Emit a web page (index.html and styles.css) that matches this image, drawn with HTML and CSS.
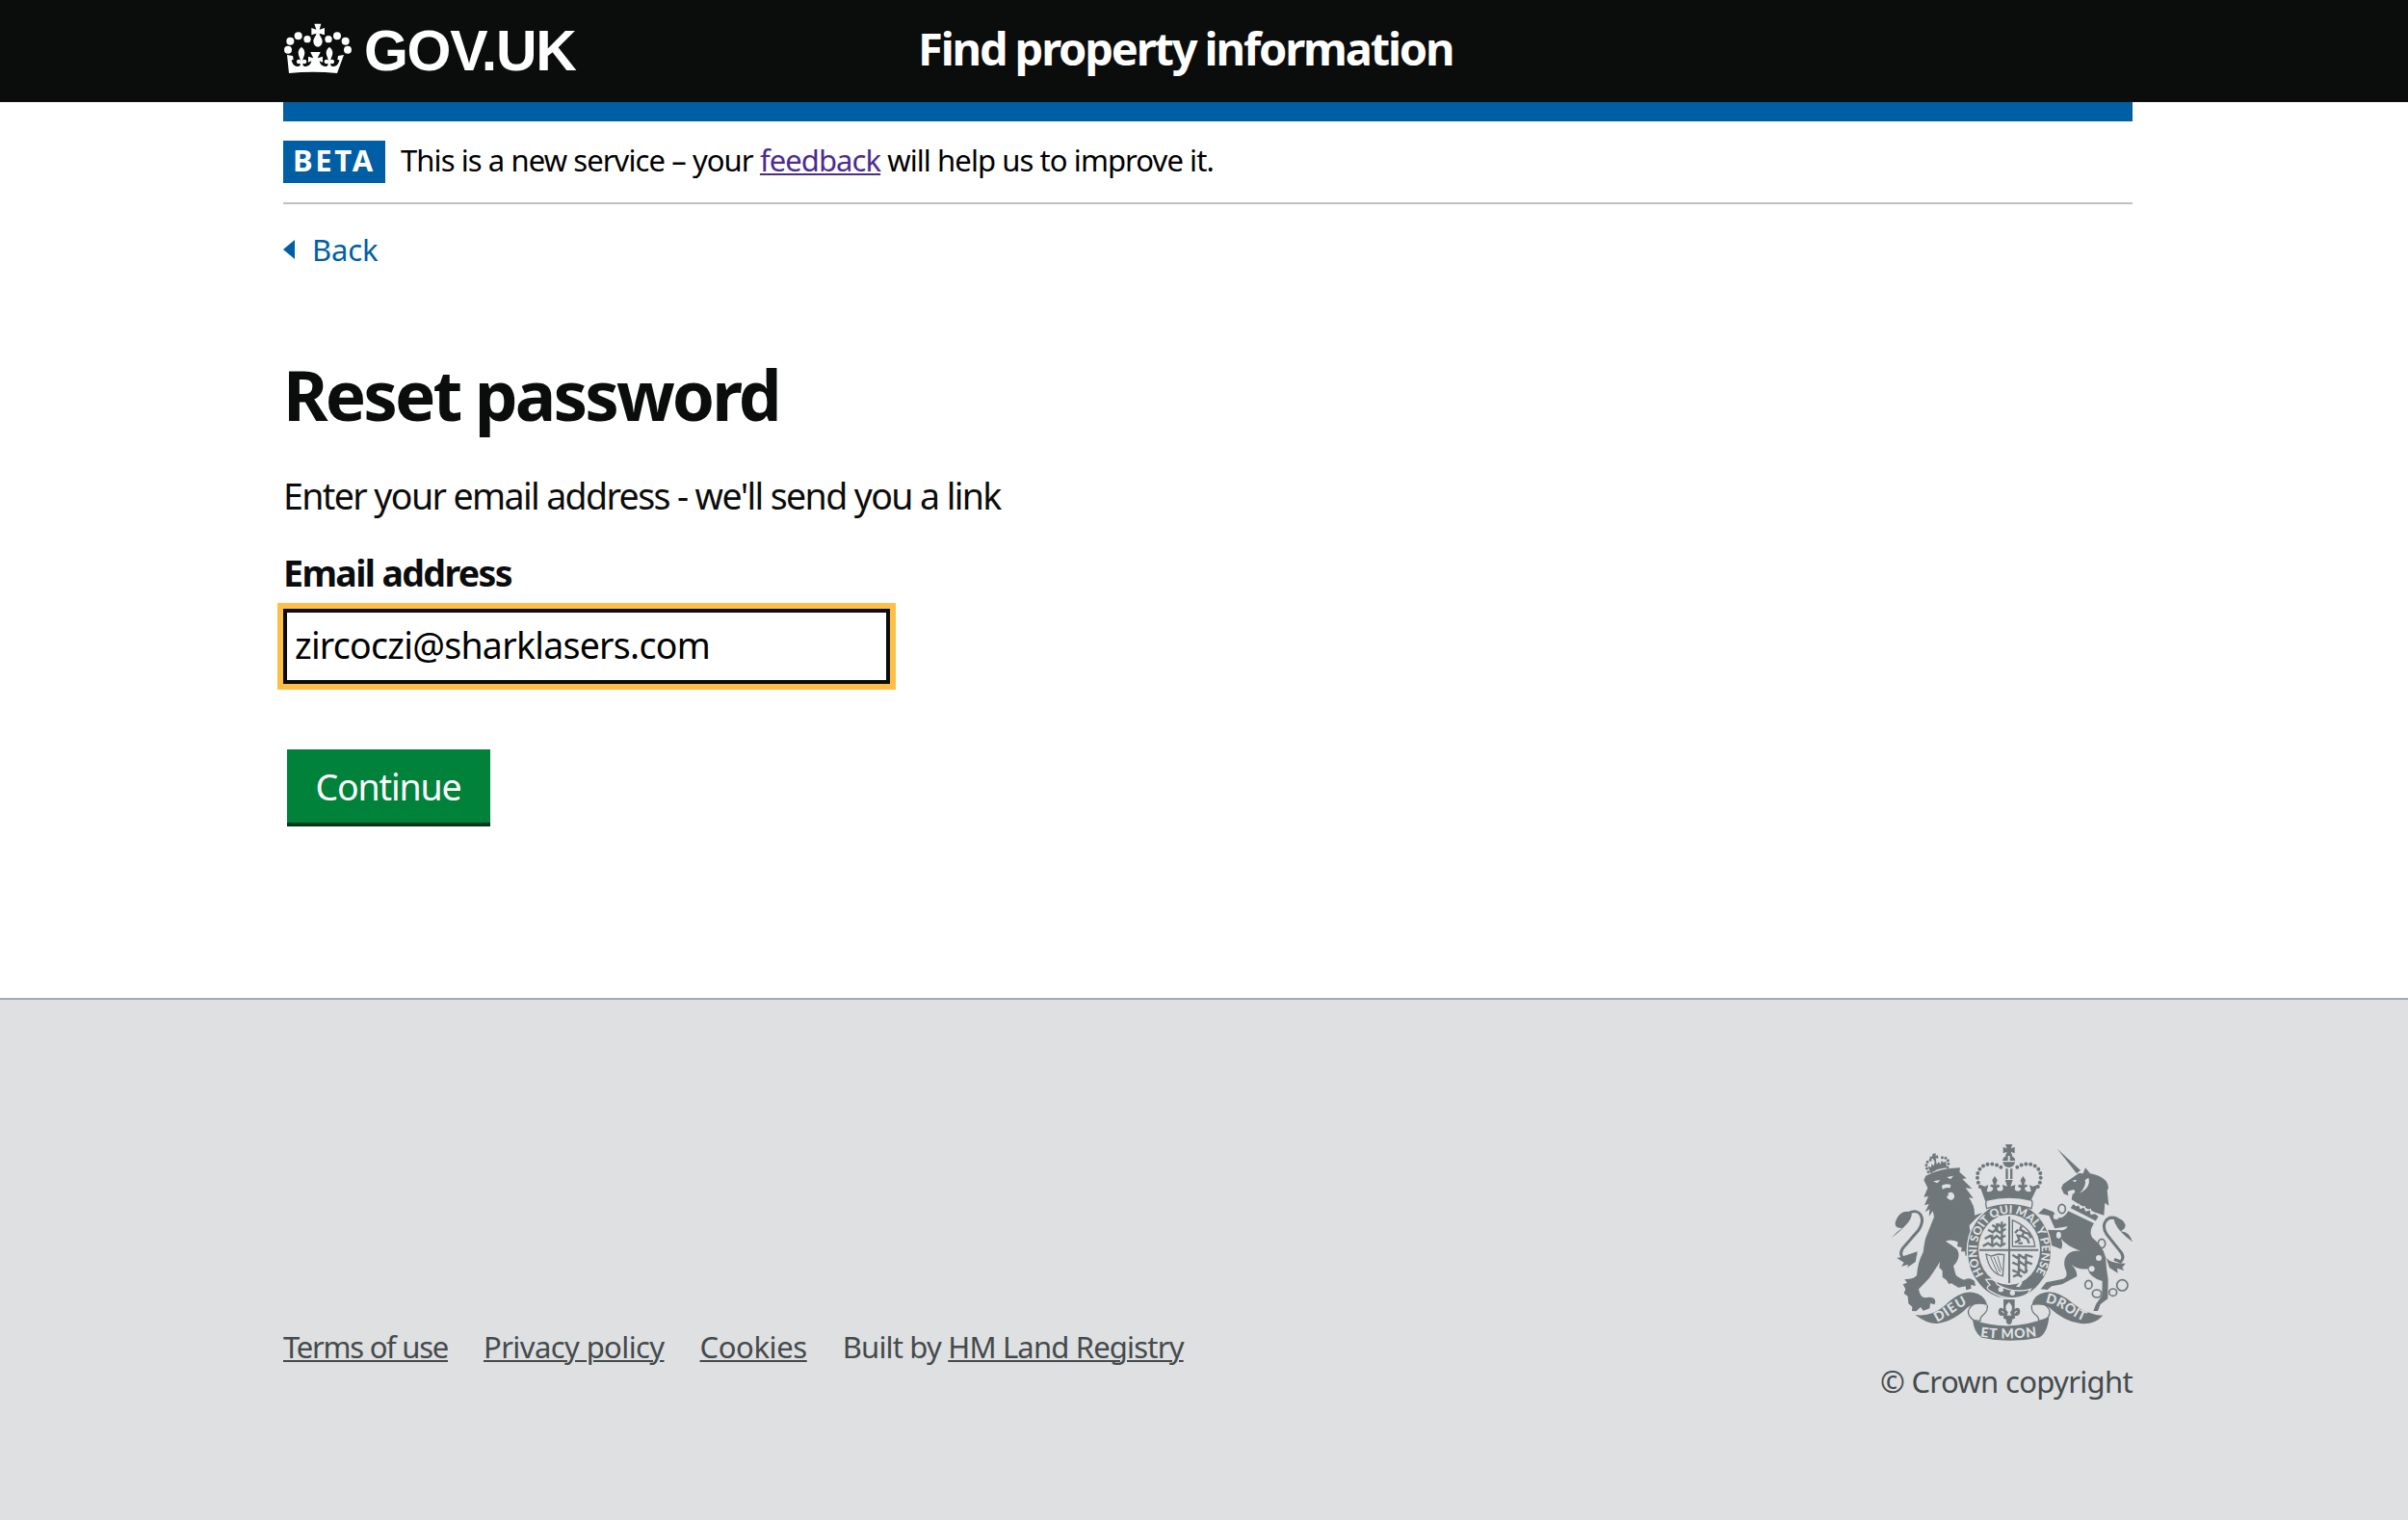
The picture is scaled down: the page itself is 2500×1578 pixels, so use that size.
FILE: index.html
```html
<!DOCTYPE html>
<html lang="en">
<head>
<meta charset="utf-8">
<title>Reset password</title>
<link rel="stylesheet" href="styles.css">
</head>
<body>
<header class="header">
  <div class="container header-row">
    <a class="logo" href="#">
      <svg class="crown" viewBox="45 42 210 156" fill="#fff">
        <path d="M139 44h21l-5 18 16-5v22l-16-5c0 8 9 14 9 25a14 17 0 0 1-28 0c0-11 9-17 9-25l-15 5V57l15 5z"/>
        <circle cx="89" cy="82" r="12"/><circle cx="210" cy="82" r="12"/><circle cx="117" cy="92" r="11"/><circle cx="183" cy="92" r="11"/><circle cx="64" cy="98" r="12"/><circle cx="236" cy="98" r="12"/><circle cx="57" cy="125" r="12"/><circle cx="243" cy="125" r="12"/>
        <path d="M54 141l18 3 2 12-6 1c2 13 11 21 19 20 8-1 11-7 6-10-4 3-9 1-9-5s7-9 11-4c0-9-6-14-6-24 0-8 5-14 10-18 5 4 10 10 10 18 0 10-6 15-6 24 4-5 12-2 12 4s-6 8-10 5c-4 4 0 10 7 10 9 0 16-6 18-17l-10 4v-18l15 5c0-6-6-11-8-19h31c-2 8-8 13-8 19l15-5v18l-10-4c2 11 9 17 18 17 7 0 11-6 7-10-4 3-10 1-10-5s8-9 12-4c0-9-6-14-6-24 0-8 5-14 10-18 5 4 10 10 10 18 0 10-6 15-6 24 4-5 11-2 11 4s-5 8-9 5c-5 3-2 9 6 10 8 1 17-7 19-20l-6-1 2-12 18-3-21 57c-50-5-100-5-150 0z"/>
      </svg>
      <span class="logo-text">GOV.UK</span>
    </a>
    <span class="service">Find property information</span>
  </div>
</header>
<main class="container">
  <div class="bar"></div>
  <div class="phase">
    <strong class="tag">BETA</strong>
    <p class="phase-text">This is a new service – your <a class="visited" href="#">feedback</a> will help us to improve it.</p>
  </div>
  <a class="back" href="#"><svg width="12" height="20" viewBox="0 0 12 20"><path d="M0 10L12 0v20z" fill="#005ea5"/></svg>Back</a>
  <h1>Reset password</h1>
  <p class="intro">Enter your email address - we'll send you a link</p>
  <label class="label" for="email">Email address</label>
  <input class="field" id="email" type="email" value="zircoczi@sharklasers.com">
  <button class="button">Continue</button>
</main>
<footer class="footer">
  <div class="container footer-row">
    <nav class="links">
      <a class="terms" href="#">Terms of use</a><a class="privacy" href="#">Privacy policy</a><a class="cookies" href="#">Cookies</a><span class="built">Built by <a href="#">HM Land Registry</a></span>
    </nav>
    <div class="copyright">
      <svg class="crest" viewBox="72 54 750 612" fill="#6f777b">
        <defs>
          <path id="motto" d="M359 459A101 117 0 1 1 503 476"/>
          <path id="rib-l" d="M213 608C255 590 275 562 322 546"/>
          <path id="rib-m" d="M348 653Q440 665 540 649"/>
          <path id="rib-r" d="M550 547C600 553 625 590 680 608"/>
        </defs>
        <!-- central crown -->
        <path d="M426 54h22l-5 13 12-5v20l-12-5 5 13h-22l5-13-12 5V62l12 5z"/>
        <path d="M417 105a20 18 0 0 1 17-16v16zM440 89a20 18 0 0 1 17 16h-17zM418 109h38a19 17 0 0 1-38 0zM427 130h7v32h-7zM441 130h7v32h-7z"/>
        <g fill="none" stroke="#6f777b" stroke-width="12" stroke-linecap="round" stroke-dasharray="0 14.5"><path d="M412 125C385 105 335 115 339 160Q341 180 352 192"/><path d="M463 125C490 105 540 115 536 160Q534 180 523 192"/></g>
        <path d="M345 180l18 5 10-5-5 20c8 5 20 0 20-10l-10-6c5-8 10-4 11-2 0-10-4-12-4-17l8-12 8 12c0 5-4 7-4 17 2-4 10-4 12 3l-10 6c2 10 14 12 20 3l-2-14 15 5-7-20h24l-7 20 15-5-2 14c6 9 18 7 20-3l-10-6c2-7 10-7 12-3 0-10-4-12-4-17l8-12 8 12c0 5-4 7-4 17 2-4 8-4 11 2l-10 6c0 10 12 15 20 10l-5-20 10 5 18-5-24 50q-70-22-142 0z"/>
        <!-- small crown and lion -->
        <g fill="none" stroke="#6f777b" stroke-width="9" stroke-linecap="round" stroke-dasharray="0 11"><path d="M186 140Q168 105 202 101"/><path d="M246 126Q258 90 218 96"/></g>
        <path d="M199 84l11-2-2 8 8-2 1 10-8-1 3 19 7-7 5 8 3-12 8 6 6-6 2 22q-30 2-50 18l-8-22 10 2 1-10 7 6 3-13-6-10-8 3-2-9 8 0z"/>
        <path d="M172 165L178 152Q225 128 285 127L283 140 305 160 292 162 322 192 302 190 326 222 312 220Q332 248 330 275L355 267Q332 285 315 305 310 320 330 340L348 385 348 405 325 413 312 408 315 395 302 402 300 388 288 388 290 375 276 372 278 358Q255 348 240 356 260 368 275 380C287 398 278 420 264 433L272 462Q295 480 302 474 318 468 330 480L333 495 318 492 320 503 304 508 302 496 280 500 258 487 250 489 242 476 230 468 230 448 220 438 222 420Q210 440 188 472L156 505Q160 530 175 532 208 526 208 545L205 553 192 549 190 565 170 572 162 561 148 574 135 573 136 560 124 550 122 527 110 518 115 505 107 490 120 485 112 474Q140 475 150 462 153 420 170 390 175 350 180 340L204 280 200 262 188 278 190 256 176 265 188 240 174 243 186 216 172 218 184 190z"/>
        <path d="M201 169l22-4-9 10zM244 156l20-4-9 11zM228 182q12-8 28-2l-2 10q-14-4-24 4zM247 206q16-8 20 8 2 10-10 14-14-4-14-12 8-2 4-10z" fill="#dee0e2"/>
        <path d="M72 345Q88 325 105 315 72 315 88 285 105 255 133 267 142 290 72 345z"/>
        <path d="M125 268C160 250 180 285 155 322L106 378Q94 400 110 407L150 394" fill="none" stroke="#6f777b" stroke-width="9"/>
        <path d="M88 408Q105 405 152 388L146 420 120 438 124 428 102 434 110 422z"/>
        <!-- unicorn -->
        <path d="M588 68L660 135 648 145zM600 190L606 178 655 144 668 145 675 127 690 145Q745 155 747 190L743 198 748 245 736 236 733 275Q690 265 632 226L635 210Q650 200 638 195L620 200 622 214 608 208z"/>
        <path d="M685 158Q694 186 658 206 680 182 674 165zM634 167l14-3-4 8z" fill="#dee0e2"/>
        <path d="M637 237l10 8 8-4 5 12 12-5 5 13 14-4 2 14 15-2 10 10-10 16-82-42z" fill="#6f777b" stroke="#dee0e2" stroke-width="4"/>
        <path d="M622 262L702 300Q685 325 696 344 730 370 738 405 740 440 746 475L745 535 722 552 714 573 700 573 708 552 727 525 728 480Q690 470 682 442 650 445 632 428 652 450 648 466L602 490 570 496 557 507 536 505 553 484 602 474Q625 468 612 440 603 410 625 392 640 383 660 386 615 370 597 345 608 362 600 380L572 370 552 345 550 320 602 322Q615 320 620 310L580 316 562 276 528 270 546 253 575 264 588 280Q605 290 622 262z"/>
        <path d="M822 358Q812 325 785 325 812 310 790 290 768 275 764 288 770 320 822 358z"/>
        <path d="M775 286C740 272 722 305 742 335L782 385Q800 405 785 420L765 412" fill="none" stroke="#6f777b" stroke-width="9"/>
        <path d="M738 402Q745 425 800 425L790 438 796 447 774 440 776 455 750 438z"/>
        <g fill="none" stroke="#6f777b" stroke-width="5"><ellipse cx="602" cy="255" rx="11" ry="14"/><ellipse cx="592" cy="337" rx="10" ry="13" fill="#dee0e2"/><ellipse cx="726" cy="363" rx="11" ry="14"/><ellipse cx="685" cy="491" rx="11" ry="13"/><ellipse cx="711" cy="519" rx="14" ry="12"/><ellipse cx="761" cy="515" rx="12" ry="11"/><circle cx="790" cy="493" r="17"/></g>
        <g fill="#dee0e2"><circle cx="584" cy="279" r="9"/><circle cx="717" cy="408" r="9"/><circle cx="695" cy="442" r="9"/></g>
        <!-- garter -->
        <ellipse cx="438" cy="386" rx="131" ry="150" stroke="#dee0e2" stroke-width="4"/>
        <path d="M368 228q70-17 139 0 6 5 0 26-70-24-139 0-6-20 0-26z" fill="#dee0e2" stroke="#6f777b" stroke-width="4"/>
        <ellipse cx="438" cy="382" rx="96" ry="110" fill="#dee0e2"/>
        <path d="M435 278h6v208h-6zM345 380h184v6H345z"/>
        <g fill="none" stroke="#6f777b" stroke-width="7"><path d="M385 305l12 8 9-9 9 10 12-12M372 320l15 8 9-9 12 10 19-12M362 348l16-9 9 10 12-10 10 8 17-9M356 371l16-9 14 9 12-9 12 9 16-9M400 300v28M415 295v75M385 335v36"/><path d="M448 290v82h70q-5-55-70-82z" stroke-width="4"/><path d="M456 360l14-8-6-14 14 2 6-14-12-6 4-12M478 340l16 8 6 14M484 328l14 4 8 14M456 330l10-10M466 362h14"/><path d="M366 396l16 6 22-6 18 2-4 66q-42-8-52-68z" stroke-width="4"/><path d="M380 405l24 55M390 405l20 48M402 402l12 44" stroke-width="3"/><path d="M448 398l14 9 9-8 12 9 10-9 18 6M448 422l16 7 9-8 12 9 10-9 14 6M448 446l16 7 9-8 12 9 10-9M450 466l14-6 14 6M468 395v70M490 395v60"/></g>
        <path d="M365 475Q395 470 400 490 450 520 505 505L495 520Q440 550 380 512 360 500 378 492z" stroke="#dee0e2" stroke-width="4"/>
        <g fill="#dee0e2"><circle cx="412" cy="506" r="8"/><circle cx="448" cy="517" r="8"/><path d="M459 497l14-16 6 4-9 14z"/></g>
        <text class="motto"><textPath href="#motto" textLength="490" lengthAdjust="spacing">HONI SOIT QUI MAL Y PENSE</textPath></text>
        <!-- plant and ribbon -->
        <path d="M420 537h35v30q16-10 17 8-2 16-18 12 8 8-7 12 0 16-9 16-10 0-10-16-14-4-6-12-18 4-18-12 2-18 16-8z"/>
        <path d="M437 545q18 18 4 32l4 10h-14l3-10q-16-14 3-32zM412 572q10 0 10 10M464 572q-10 0-10 10" fill="#dee0e2"/>
        <path d="M145 585Q195 592 235 558 285 508 325 515 360 520 370 555 335 545 310 560 265 606 215 612 185 615 145 585zM730 587Q680 585 640 552 590 508 550 515 515 520 508 555 540 550 560 560 610 606 660 612 700 618 730 587z"/>
        <g fill="none" stroke="#6f777b" stroke-width="4"><path d="M328 552C300 570 310 590 328 602L348 604C345 580 372 590 370 555M546 552C575 570 565 590 548 602L530 604C532 580 505 590 508 555"/></g>
        <path d="M324 600Q440 642 562 592 556 645 530 656 440 675 352 656 328 640 324 600z"/>
        <g class="ribbon"><text><textPath href="#rib-l" textLength="110">DIEU</textPath></text><text><textPath href="#rib-m" textLength="176">ET MON</textPath></text><text><textPath href="#rib-r" textLength="134">DROIT</textPath></text></g>
      </svg>
      <span>© Crown copyright</span>
    </div>
  </div>
</footer>
</body>
</html>
```
FILE: styles.css
```css
* { box-sizing: border-box; }
body { margin: 0; background: #fff; color: #0b0c0c; font-family: "Noto Sans", sans-serif; font-size: 31px; line-height: 40px; }
p, h1 { margin: 0; }
.container { width: 1920px; margin-left: 294px; }
.header { height: 106px; background: #0b0c0c; color: #fff; }
.header-row { display: flex; align-items: flex-start; }
.logo { display: flex; width: 658px; margin-left: 1px; color: #fff; text-decoration: none; }
.crown { width: 70px; height: 52px; margin-top: 24px; }
.logo-text { margin: 24px 0 0 13px; font-size: 59px; line-height: 58px; font-weight: 700; font-family: "Liberation Sans", sans-serif; letter-spacing: -1.3px; }
.service { margin-top: 20px; font-size: 47px; line-height: 60px; font-weight: 700; letter-spacing: -2.15px; word-spacing: -1px; }
.bar { height: 20px; background: #005ea5; }
.phase { display: flex; gap: 16px; padding: 20px 0; border-bottom: 2px solid #bfc1c3; color: #000; }
.phase-text { letter-spacing: -.92px; }
.tag { width: 106px; height: 44px; padding-left: 10px; background: #005ea5; color: #fff; letter-spacing: 2.7px; }
a { text-decoration-thickness: 2px; text-underline-offset: 2px; }
.visited { color: #4c2c92; }
.back { display: flex; align-items: center; gap: 18px; margin-top: 27px; color: #005ea5; letter-spacing: -.1px; text-decoration: none; }
h1 { margin-top: 90.5px; font-size: 71px; line-height: 80px; letter-spacing: -2.9px; }
.intro, .label, .field, .button { font-size: 37.5px; line-height: 50px; }
.intro { margin-top: 40px; letter-spacing: -1.61px; }
.label { display: block; margin-top: 30px; font-weight: 700; letter-spacing: -1.62px; }
.field { display: block; width: 630px; height: 78px; margin-top: 12.5px; padding: 5px 8px 9px; border: 4px solid #0b0c0c; border-radius: 0; outline: 6px solid #ffbf47; color: #000; font-family: inherit; letter-spacing: -.73px; }
.button { display: block; width: 211px; height: 80px; margin: 68px 0 0 4px; padding: 1px 1px 0 0; border: 0; border-bottom: 4px solid #003618; background: #00823b; color: #fff; font-family: inherit; letter-spacing: -1.16px; }
.footer { height: 542px; margin-top: 178px; padding-top: 150px; border-top: 2px solid #a1acb2; background: #dee0e2; color: #454a4c; }
.footer a { color: #454a4c; }
.footer-row { display: flex; justify-content: space-between; }
.links { display: flex; gap: 37px; padding-top: 190px; }
.terms { letter-spacing: -1.27px; }
.privacy { letter-spacing: -.6px; }
.cookies { letter-spacing: -.4px; }
.built { letter-spacing: -.82px; }
.copyright { display: flex; flex-direction: column; align-items: flex-end; gap: 22px; letter-spacing: -.67px; }
.crest { width: 250px; height: 204px; }
.motto, .ribbon { fill: #dee0e2; font-family: Lato, sans-serif; font-weight: 900; font-size: 36px; letter-spacing: 0; }
.ribbon { font-size: 42px; }
```
